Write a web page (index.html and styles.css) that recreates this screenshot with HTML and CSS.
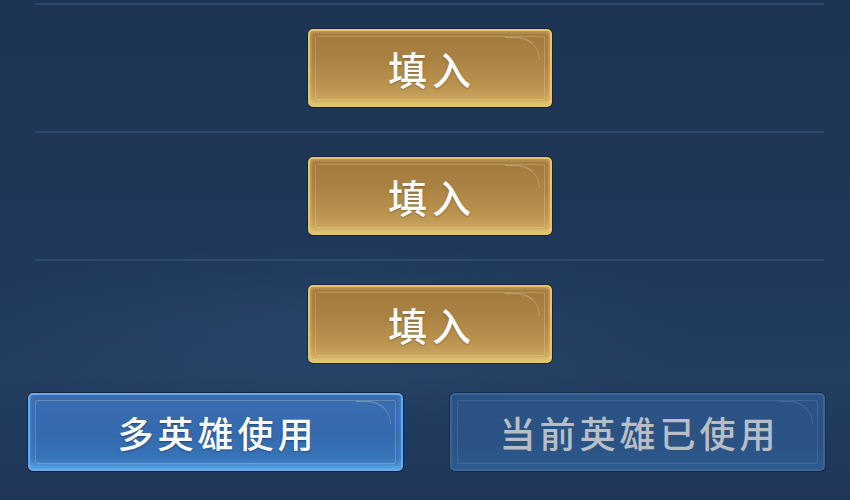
FILE: index.html
```html
<!DOCTYPE html>
<html lang="zh-CN">
<head>
<meta charset="utf-8">
<title>填入</title>
<link rel="stylesheet" href="styles.css">
</head>
<body>
<div class="page">
  <div class="list">
    <div class="row"><button class="btn gold"><span class="label">填入</span></button></div>
    <div class="row"><button class="btn gold"><span class="label">填入</span></button></div>
    <div class="row"><button class="btn gold"><span class="label">填入</span></button></div>
  </div>
  <div class="actions">
    <button class="btn wide blue"><span class="label">多英雄使用</span></button>
    <button class="btn wide off"><span class="label">当前英雄已使用</span></button>
  </div>
</div>
</body>
</html>
```
FILE: styles.css
```css
html, body {
  margin: 0;
  padding: 0;
}
body {
  width: 850px;
  height: 500px;
  overflow: hidden;
  background:
    radial-gradient(ellipse 520px 140px at 330px 330px, rgba(70,110,160,0.16), rgba(70,110,160,0) 70%),
    linear-gradient(180deg, #1e3455 0%, #1f3758 50%, #233e60 75%, #1f3658 100%);
  font-family: "Noto Sans CJK SC", "Noto Sans", sans-serif;
}
.page {
  padding-top: 3px;
}
.list {
  margin: 0 26px 0 35px;
}
.row {
  border-top: 2px solid #2c4a6f;
  padding: 24px 0 24px;
  display: flex;
  justify-content: center;
}
.row:last-child {
  padding-bottom: 30px;
}
.btn {
  position: relative;
  box-sizing: border-box;
  height: 78px;
  border-radius: 5px;
  padding: 0;
  margin: 0;
  display: flex;
  align-items: center;
  justify-content: center;
  font-family: "Noto Sans CJK SC", "Noto Sans", sans-serif;
  font-weight: 500;
  font-size: 36px;
  letter-spacing: 4px;
  color: #ffffff;
  cursor: pointer;
}
.label {
  margin-right: -4px;
  line-height: 1;
  text-shadow: 0 1px 2px rgba(60,40,10,0.35);
}
.btn::before {
  content: "";
  position: absolute;
  inset: 5px;
  border: 1px solid rgba(255,240,200,0.22);
  border-radius: 2px;
  pointer-events: none;
}
.btn::after {
  content: "";
  position: absolute;
  top: 6px;
  right: 10px;
  width: 34px;
  height: 22px;
  border-top: 1px solid rgba(255,245,210,0.3);
  border-right: 1px solid rgba(255,245,210,0.2);
  border-radius: 0 30px 0 0;
  pointer-events: none;
}
.gold {
  width: 244px;
  font-size: 39px;
  letter-spacing: 5px;
  border: 2px solid #e6c46a;
  background: linear-gradient(180deg, #a37a3e 0%, #aa8243 40%, #bb9450 75%, #d2ae62 100%);
  box-shadow: 0 0 0 1px rgba(15,25,40,0.6), inset 0 -3px 4px rgba(255,228,140,0.45), inset 0 2px 3px rgba(255,230,160,0.3);
}
.gold .label {
  margin-right: -5px;
  text-shadow: 0 1px 2px rgba(90,60,20,0.45);
}
.actions {
  display: flex;
  justify-content: space-between;
  padding: 0 25px 0 28px;
}
.wide {
  width: 375px;
}
.blue {
  border: 2px solid #69a9ec;
  background: linear-gradient(180deg, #3a6cb0 0%, #356aae 55%, #3774b8 85%, #4b93d8 100%);
  box-shadow: 0 0 0 1px rgba(10,20,40,0.6), inset 0 -3px 5px rgba(110,190,255,0.45);
}
.blue .label {
  text-shadow: 0 1px 2px rgba(10,30,70,0.45);
}
.off {
  border: 2px solid #3b6698;
  background: linear-gradient(180deg, #2b5486 0%, #2a5283 60%, #2d5a8e 100%);
  color: #b9bec6;
  box-shadow: 0 0 0 1px rgba(10,20,40,0.4);
}
.off .label {
  text-shadow: none;
}
.off::before {
  border-color: rgba(150,190,230,0.18);
}
.off::after {
  border-color: rgba(150,190,230,0.2);
}
```
